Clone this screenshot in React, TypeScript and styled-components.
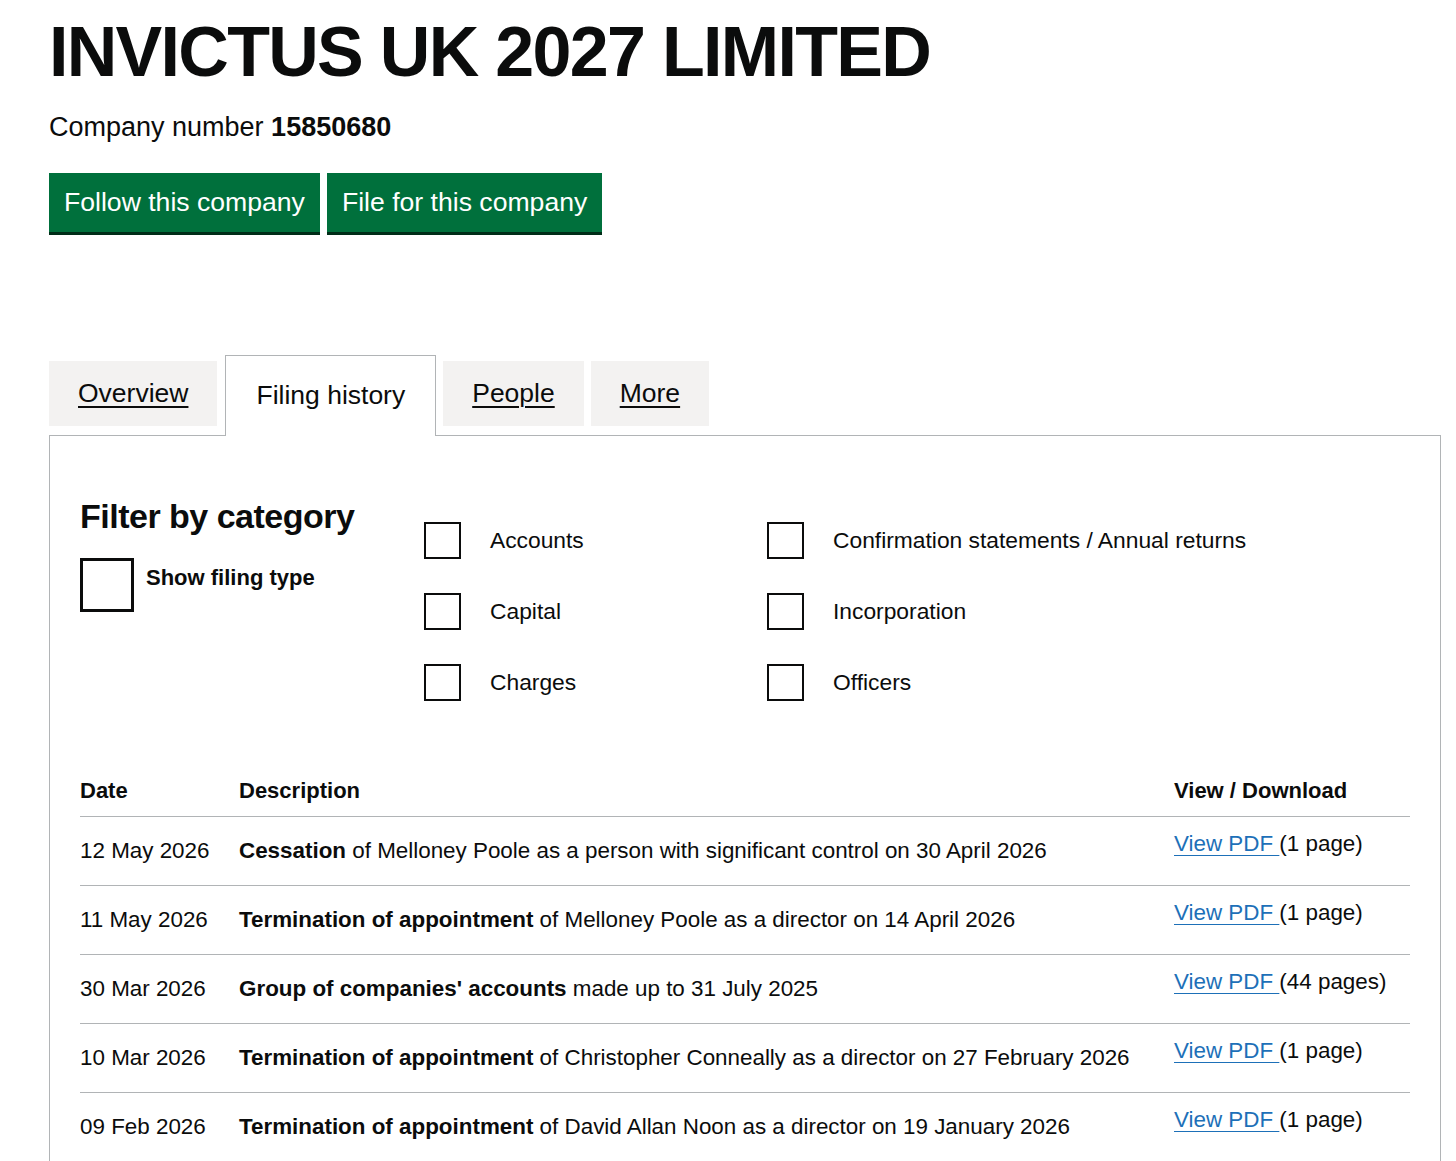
import React from 'react'
import styled, { createGlobalStyle } from 'styled-components'

const GlobalStyle = createGlobalStyle`
  body {
    margin: 0;
    background: #ffffff;
    color: #0b0c0c;
    font-family: 'Liberation Sans', Arial, sans-serif;
  }
`

interface Filing {
  date: string
  title: string
  rest: string
  pages: string
}

const filings: Filing[] = [
  {
    date: '12 May 2026',
    title: 'Cessation',
    rest: ' of Melloney Poole as a person with significant control on 30 April 2026',
    pages: '(1 page)',
  },
  {
    date: '11 May 2026',
    title: 'Termination of appointment',
    rest: ' of Melloney Poole as a director on 14 April 2026',
    pages: '(1 page)',
  },
  {
    date: '30 Mar 2026',
    title: "Group of companies' accounts",
    rest: ' made up to 31 July 2025',
    pages: '(44 pages)',
  },
  {
    date: '10 Mar 2026',
    title: 'Termination of appointment',
    rest: ' of Christopher Conneally as a director on 27 February 2026',
    pages: '(1 page)',
  },
  {
    date: '09 Feb 2026',
    title: 'Termination of appointment',
    rest: ' of David Allan Noon as a director on 19 January 2026',
    pages: '(1 page)',
  },
]

const categories = [
  'Accounts',
  'Confirmation statements / Annual returns',
  'Capital',
  'Incorporation',
  'Charges',
  'Officers',
]

const tabs = ['Overview', 'Filing history', 'People', 'More']

const App: React.FC = () => {
  return (
    <Page>
      <GlobalStyle />
      <Title>INVICTUS UK 2027 LIMITED</Title>
      <CompanyNumber>
        Company number <strong>15850680</strong>
      </CompanyNumber>
      <Actions>
        <GreenButton>Follow this company</GreenButton>
        <GreenButton>File for this company</GreenButton>
      </Actions>

      <TabList>
        {tabs.map(tab => (
          <Tab key={tab} active={tab === 'Filing history'}>
            <TabLink active={tab === 'Filing history'}>{tab}</TabLink>
          </Tab>
        ))}
      </TabList>

      <Panel>
        <Filters>
          <FilterIntro>
            <FilterHeading>Filter by category</FilterHeading>
            <CheckRow>
              <CheckBox large />
              <BoldLabel>Show filing type</BoldLabel>
            </CheckRow>
          </FilterIntro>
          <CategoryGrid>
            {categories.map(c => (
              <Category key={c}>
                <CheckBox />
                <CategoryLabel>{c}</CategoryLabel>
              </Category>
            ))}
          </CategoryGrid>
        </Filters>

        <Table>
          <thead>
            <tr>
              <HeadCell style={{ width: 159 }}>Date</HeadCell>
              <HeadCell>Description</HeadCell>
              <HeadCell style={{ width: 236 }}>View / Download</HeadCell>
            </tr>
          </thead>
          <tbody>
            {filings.map(f => (
              <tr key={f.date}>
                <Cell>{f.date}</Cell>
                <Cell>
                  <strong>{f.title}</strong>
                  {f.rest}
                </Cell>
                <DownloadCell>
                  <PdfLink href="#">View PDF </PdfLink>
                  {f.pages}
                </DownloadCell>
              </tr>
            ))}
          </tbody>
        </Table>
      </Panel>
    </Page>
  )
}

const Page = styled.div`
  padding: 12px 15px 0 49px;
`

const Title = styled.h1`
  margin: 0;
  font-size: 70px;
  line-height: 80px;
  font-weight: 700;
  letter-spacing: -1.7px;
`

const CompanyNumber = styled.p`
  margin: 17px 0 0;
  font-size: 27px;
  line-height: 36px;
  strong {
    font-weight: 700;
  }
`

const Actions = styled.div`
  display: flex;
  gap: 7px;
  margin-top: 28px;
`

const GreenButton = styled.button`
  height: 59px;
  padding: 0 15px;
  border: 0;
  border-radius: 0;
  background: #00703c;
  box-shadow: 0 3px 0 #002d18;
  color: #ffffff;
  font-family: inherit;
  font-size: 26.6px;
  cursor: pointer;
`

const TabList = styled.ul`
  display: flex;
  align-items: flex-start;
  gap: 7px;
  list-style: none;
  margin: 123px 0 -1px;
  padding: 0;
  position: relative;
  z-index: 1;
`

const Tab = styled.li<{ active?: boolean }>`
  display: flex;
  align-items: center;
  box-sizing: border-box;
  padding: 0 ${p => (p.active ? '30px' : '29px')};
  height: ${p => (p.active ? '81px' : '65px')};
  margin-top: ${p => (p.active ? '0' : '6px')};
  margin-left: ${p => (p.active ? '1px' : '0')};
  background: ${p => (p.active ? '#ffffff' : '#f3f2f1')};
  border: ${p => (p.active ? '1px solid #b1b4b6' : '0')};
  border-bottom: 0;
  padding-bottom: ${p => (p.active ? '2px' : '0')};
`

const TabLink = styled.a<{ active?: boolean }>`
  font-size: 26.5px;
  color: #0b0c0c;
  text-decoration: ${p => (p.active ? 'none' : 'underline')};
  text-underline-offset: 4px;
  text-decoration-thickness: 2px;
`

const Panel = styled.div`
  border: 1px solid #b1b4b6;
  padding: 60px 30px 0;
  min-height: 900px;
`

const Filters = styled.div`
  display: flex;
`

const FilterIntro = styled.div`
  width: 344px;
  flex-shrink: 0;
`

const FilterHeading = styled.h2`
  margin: 0;
  font-size: 34px;
  line-height: 40px;
  font-weight: 700;
  letter-spacing: -0.5px;
`

const CheckRow = styled.div`
  display: flex;
  align-items: flex-start;
  gap: 12px;
  margin-top: 22px;
`

const CheckBox = styled.span<{ large?: boolean }>`
  display: block;
  flex-shrink: 0;
  box-sizing: border-box;
  width: ${p => (p.large ? '54px' : '37px')};
  height: ${p => (p.large ? '54px' : '37px')};
  border: ${p => (p.large ? '3px' : '2px')} solid #0b0c0c;
  background: #ffffff;
`

const BoldLabel = styled.span`
  font-size: 22px;
  line-height: 32px;
  font-weight: 700;
  padding-top: 4px;
`

const CategoryGrid = styled.div`
  display: grid;
  grid-template-columns: 343px 1fr;
  row-gap: 34px;
  margin-top: 26px;
`

const Category = styled.div`
  display: flex;
  align-items: center;
  gap: 29px;
`

const CategoryLabel = styled.span`
  font-size: 22.8px;
`

const Table = styled.table`
  width: 100%;
  margin-top: 77px;
  border-collapse: collapse;
  font-size: 22.4px;
  strong {
    font-weight: 700;
  }
`

const HeadCell = styled.th`
  text-align: left;
  font-weight: 700;
  font-size: 22px;
  padding: 0 0 12px;
  border-bottom: 1px solid #b1b4b6;
`

const Cell = styled.td`
  height: 68px;
  padding: 0 10px 0 0;
  vertical-align: middle;
  border-bottom: 1px solid #b1b4b6;
  white-space: nowrap;
`

const DownloadCell = styled(Cell)`
  height: 54px;
  padding-top: 14px;
  vertical-align: top;
`

const PdfLink = styled.a`
  color: #1d70b8;
  text-decoration: underline;
  text-underline-offset: 4px;
  text-decoration-thickness: 1px;
  white-space: pre;
`

export default App
